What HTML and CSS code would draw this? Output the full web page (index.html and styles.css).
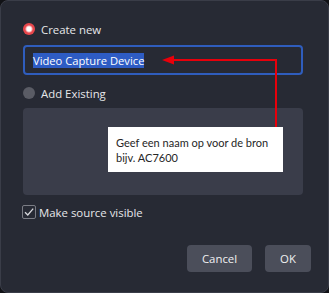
FILE: index.html
```html
<!DOCTYPE html>
<html lang="en">

<head>
    <meta charset="UTF-8">
    <meta name="viewport" content="width=device-width, initial-scale=1.0">
    <title>Create Source</title>
    <link rel="stylesheet" href="styles.css">
</head>

<body>
    <div class="dialog">
        <div class="option-row first">
            <span class="radio checked"></span>
            <span class="option-label">Create new</span>
        </div>
        <div class="name-field">
            <span class="selected-text">Video Capture Device</span>
        </div>
        <div class="option-row second">
            <span class="radio"></span>
            <span class="option-label">Add Existing</span>
        </div>
        <div class="source-list"></div>
        <div class="option-row third">
            <span class="checkbox">
                <svg width="12" height="12" viewBox="0 0 12 12">
                    <path d="M2 6.2 L4.8 9 L10.2 2.6" fill="none" stroke="#d8d9dd" stroke-width="1.3" />
                </svg>
            </span>
            <span class="option-label">Make source visible</span>
        </div>
        <div class="button-row">
            <button class="btn">Cancel</button>
            <button class="btn ok">OK</button>
        </div>

        <!-- annotation overlay -->
        <svg class="arrow" width="329" height="293" viewBox="0 0 329 293">
            <path d="M172 60 H276 V128" fill="none" stroke="#e8000b" stroke-width="2" />
            <polygon points="162,60 174,55.5 174,64.5" fill="#e8000b" />
        </svg>
        <div class="tooltip">Geef een naam op voor de bron<br>bijv. AC7600</div>
    </div>
</body>

</html>
```
FILE: styles.css
```css
body {
    margin: 0;
    background-color: #111216;
    font-family: "Open Sans", "Noto Sans", sans-serif;
}

.dialog {
    position: relative;
    box-sizing: border-box;
    width: 329px;
    height: 293px;
    padding: 0 25px 0 22px;
    background-color: #272a34;
    border: 1px solid #3a3d48;
    border-radius: 8px;
    display: flex;
    flex-direction: column;
}

.option-row {
    display: flex;
    align-items: center;
    height: 20px;
    color: #e6e7ea;
    font-size: 11.4px;
}

.option-row.first {
    margin-top: 18px;
}

.option-row.second {
    margin-top: 8px;
}

.option-row.third {
    margin-top: 7px;
}

.radio {
    width: 12px;
    height: 12px;
    border-radius: 50%;
    background-color: #5a5c65;
    margin-right: 6px;
}

.radio.checked {
    background: radial-gradient(circle, #ffffff 0, #ffffff 2px, #f7b5b7 3px, #e8474c 4px);
}

.name-field {
    box-sizing: border-box;
    height: 30px;
    margin-top: 6px;
    border: 2px solid #2f5dbd;
    border-radius: 4px;
    padding: 0 8px;
    display: flex;
    align-items: center;
}

.selected-text {
    background-color: #2e5cc4;
    color: #ffffff;
    font-size: 11.2px;
    line-height: 15px;
}

.source-list {
    height: 87px;
    margin-top: 5px;
    background-color: #3a3d4a;
    border-radius: 4px;
}

.checkbox {
    box-sizing: border-box;
    width: 14px;
    height: 14px;
    border: 1px solid #7b7d85;
    border-radius: 2px;
    margin: 0 3px 0 -1px;
    display: flex;
    align-items: center;
    justify-content: center;
}

.button-row {
    display: flex;
    justify-content: flex-end;
    gap: 13px;
    margin-top: 23px;
    margin-right: -8px;
}

.btn {
    height: 27px;
    width: 65px;
    border: none;
    border-radius: 4px;
    background-color: #4b4e5a;
    color: #f0f0f2;
    font-family: "Open Sans", "Noto Sans", sans-serif;
    font-size: 11.4px;
}

.btn.ok {
    width: 46px;
}

.arrow {
    position: absolute;
    left: -1px;
    top: -1px;
}

.tooltip {
    position: absolute;
    left: 107px;
    top: 126px;
    width: 175px;
    height: 45px;
    box-sizing: border-box;
    padding: 8px 8px 0 8px;
    background-color: #ffffff;
    color: #262626;
    font-family: Lato, sans-serif;
    font-size: 11px;
    line-height: 15px;
    white-space: nowrap;
}
```
